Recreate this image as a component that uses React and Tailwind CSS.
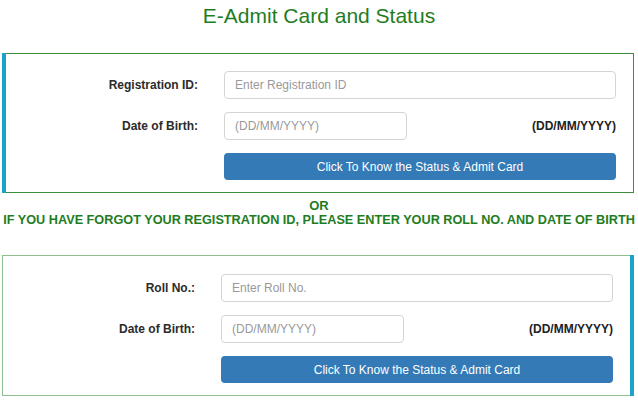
export default function App() {
  const font = { fontFamily: '"Liberation Sans", Arial, sans-serif' };
  const Row = ({ label, placeholder, wide }) => (
    <div className="flex items-center h-[28px]">
      <div className="w-[192px] text-right text-[12px] font-bold text-[#2b2b2b]">{label}</div>
      <div className="ml-[26px] flex-1 flex items-center">
        {wide ? (
          <input
            className="h-[28px] w-full rounded-[4px] border border-[#d4d4d4] px-[10px] text-[12px] placeholder-[#999] outline-none"
            placeholder={placeholder}
          />
        ) : (
          <>
            <input
              className="h-[28px] w-[183px] rounded-[4px] border border-[#d4d4d4] px-[10px] text-[12px] placeholder-[#999] outline-none"
              placeholder={placeholder}
            />
            <div className="flex-1 text-right text-[12px] font-bold text-[#222]">(DD/MM/YYYY)</div>
          </>
        )}
      </div>
    </div>
  );
  const Form = ({ first }) => (
    <div className="flex flex-col gap-[13px] pr-[17px]">
      <Row label={first ? 'Registration ID:' : 'Roll No.:'} placeholder={first ? 'Enter Registration ID' : 'Enter Roll No.'} wide />
      <Row label="Date of Birth:" placeholder="(DD/MM/YYYY)" />
      <div className="flex">
        <div className="w-[192px]" />
        <button className="ml-[26px] flex-1 h-[27px] rounded-[4px] bg-[#337ab7] text-white text-[12px]">
          Click To Know the Status &amp; Admit Card
        </button>
      </div>
    </div>
  );
  return (
    <div className="w-[638px] h-[400px] bg-white overflow-hidden" style={font}>
      <h1 className="text-center text-[21px] leading-none pt-[5px] h-[53px] text-[#1f7d1f]">E-Admit Card and Status</h1>
      <div className="ml-[2px] mr-[4px] border border-l-0 border-[#3d8b3d] flex">
        <div className="w-[4px] bg-[#1da3c6] -my-px" />
        <div className="flex-1 pt-[17px] pb-[12px]">
          <Form first />
        </div>
      </div>
      <div className="text-center text-[13px] font-bold text-[#1f7d1f] mt-[6px] leading-[13px]">OR</div>
      <div className="text-center text-[12.7px] font-bold text-[#1f7d1f] leading-[16px] whitespace-nowrap">
        IF YOU HAVE FORGOT YOUR REGISTRATION ID, PLEASE ENTER YOUR ROLL NO. AND DATE OF BIRTH
      </div>
      <div className="mt-[27px] ml-[2px] mr-[4px] border border-r-0 border-[#8fbf8f] flex">
        <div className="flex-1 pt-[18px] pb-[12px]">
          <Form />
        </div>
        <div className="w-[4px] bg-[#1da3c6] -my-px" />
      </div>
    </div>
  );
}
